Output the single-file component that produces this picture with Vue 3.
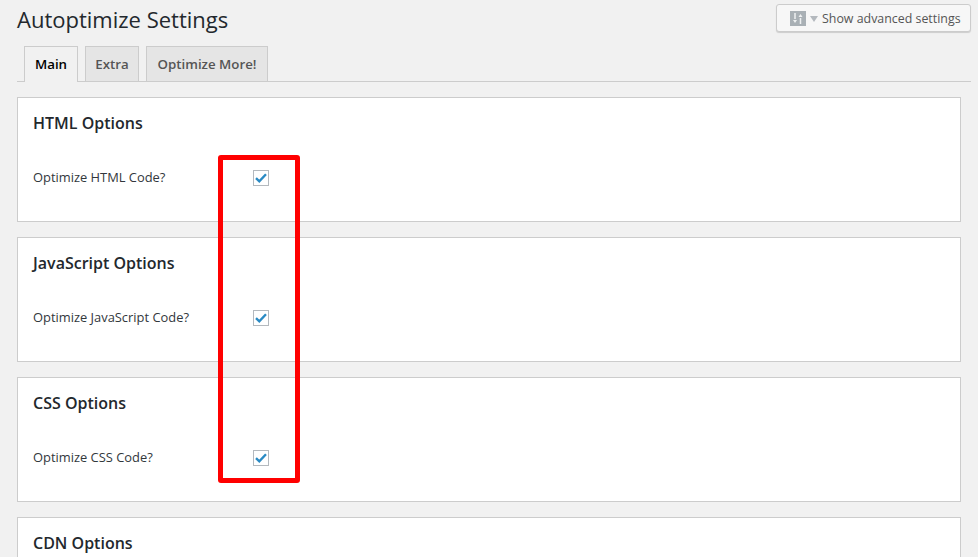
<template>
  <div class="page">
    <header class="top">
      <h1>Autoptimize Settings</h1>
      <button class="toggle">
        <span class="toggle-icon">
          <svg width="16" height="15" viewBox="0 0 16 15">
            <rect width="16" height="15" fill="#a9b0b5" />
            <path d="M5 2v6M10.500 7v6" stroke="#eef0f1" stroke-width="1.500" fill="none" />
            <path d="M3 9h4l-2 3zM8.500 6h4l-2-3z" fill="#eef0f1" />
          </svg>
        </span>
        <span class="caret"></span>
        <span>Show advanced settings</span>
      </button>
    </header>

    <nav class="tabs">
      <a
        v-for="tab in tabs"
        :key="tab"
        class="tab"
        :class="{ active: tab === 'Main' }"
      >{{ tab }}</a>
    </nav>

    <section v-for="card in cards" :key="card.title" class="card">
      <h2>{{ card.title }}</h2>
      <div v-if="card.label" class="row">
        <span class="label">{{ card.label }}</span>
        <span class="check">
          <svg width="12" height="10" viewBox="0 0 12 10">
            <path d="M1 5.200 4.300 8.300 11 1.200" stroke="#2a8ac4" stroke-width="2.400" fill="none" />
          </svg>
        </span>
      </div>
    </section>

    <div class="marker"></div>
  </div>
</template>

<script setup>
const tabs = ["Main", "Extra", "Optimize More!"];

const cards = [
  { title: "HTML Options", label: "Optimize HTML Code?" },
  { title: "JavaScript Options", label: "Optimize JavaScript Code?" },
  { title: "CSS Options", label: "Optimize CSS Code?" },
  { title: "CDN Options" },
];
</script>

<style>
html,
body {
  margin: 0;
  height: 557px;
  overflow: hidden;
  background: #f1f1f1;
}
</style>

<style scoped>
.page {
  position: relative;
  box-sizing: border-box;
  width: 978px;
  height: 557px;
  overflow: hidden;
  padding: 4px 7px 0 17px;
  font-family: "Open Sans", "Noto Sans", sans-serif;
  color: #23282d;
}

.top {
  display: flex;
  justify-content: space-between;
  align-items: flex-start;
  height: 42px;
}

h1 {
  margin: -2px 0 0;
  font-size: 22px;
  font-weight: 400;
  line-height: 34px;
}

.toggle {
  display: flex;
  align-items: center;
  box-sizing: border-box;
  width: 195px;
  height: 28px;
  padding: 0 10px 0 13px;
  border: 1px solid #ccc;
  border-radius: 3px;
  box-shadow: 0 1px 1px rgba(0, 0, 0, 0.15);
  background: #f7f7f7;
  font: inherit;
  font-size: 12.400px;
  color: #555;
  white-space: nowrap;
}

.toggle-icon {
  display: flex;
  margin-right: 4px;
}

.caret {
  width: 0;
  height: 0;
  margin: 2px 4px 0 0;
  border: 4px solid transparent;
  border-top: 6px solid #b4b9be;
  border-bottom: 0;
}

.tabs {
  display: flex;
  gap: 7px;
  height: 35px;
  padding-left: 7px;
  border-bottom: 1px solid #ccc;
}

.tab {
  box-sizing: border-box;
  width: 54px;
  height: 35px;
  border: 1px solid #ccc;
  border-bottom: 0;
  background: #e5e5e5;
  font-size: 13.300px;
  font-weight: 600;
  line-height: 35px;
  text-align: center;
  color: #555;
  white-space: nowrap;
}

.tab:last-child {
  width: 122px;
}

.tab.active {
  height: 36px;
  background: #f1f1f1;
  color: #000;
}

.card {
  box-sizing: border-box;
  width: 944px;
  height: 125px;
  margin-top: 15px;
  padding: 13px 15px 0;
  border: 1px solid #ccc;
  background: #fff;
}

h2 {
  margin: 0;
  font-size: 16px;
  font-weight: 600;
  line-height: 24px;
}

.row {
  display: flex;
  align-items: center;
  height: 20px;
  margin-top: 32px;
}

.label {
  width: 220px;
  font-size: 12.900px;
  color: #32373c;
  white-space: nowrap;
}

.check {
  display: flex;
  align-items: center;
  justify-content: center;
  box-sizing: border-box;
  width: 16px;
  height: 16px;
  margin-top: 2px;
  border: 1px solid #b4b9be;
  background: #fff;
}

.marker {
  position: absolute;
  left: 218px;
  top: 155px;
  box-sizing: border-box;
  width: 82px;
  height: 328px;
  border: 5px solid #f00;
  border-radius: 3px;
}
</style>
